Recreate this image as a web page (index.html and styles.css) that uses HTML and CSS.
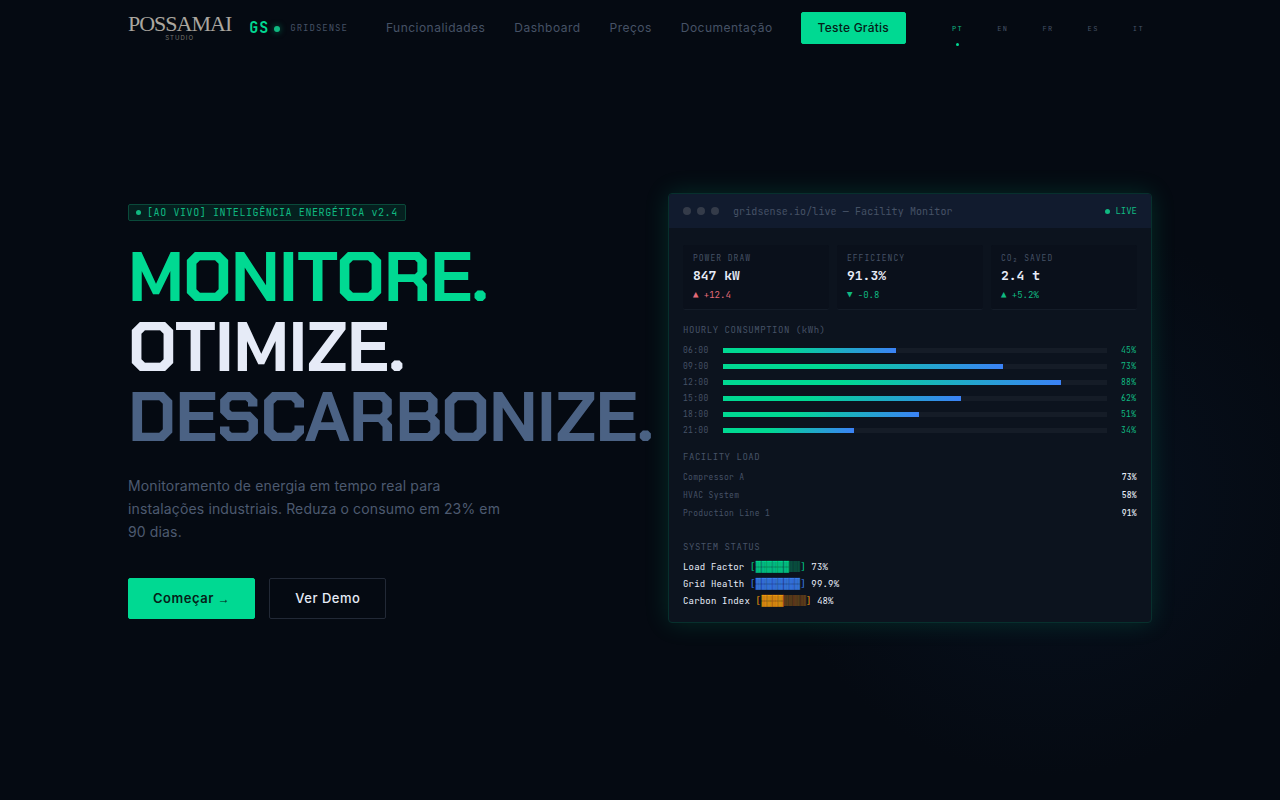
FILE: index.html
```html
<!DOCTYPE html>
<html lang="pt">
<head>
    <meta charset="UTF-8">
    <meta name="viewport" content="width=device-width, initial-scale=1">
    <title>GridSense</title>
    <link rel="stylesheet" href="styles.css">
</head>
<body>
    <header class="nav">
        <a class="studio" href="#">
            <span class="studio-name">POSSAMAI</span>
            <span class="studio-sub">STUDIO</span>
        </a>
        <a class="brand" href="#">
            <span class="brand-mark">GS</span>
            <span class="brand-dot"></span>
            <span class="brand-name">GRIDSENSE</span>
        </a>
        <nav class="links">
            <a href="#">Funcionalidades</a>
            <a href="#">Dashboard</a>
            <a href="#">Preços</a>
            <a href="#">Documentação</a>
        </nav>
        <button class="btn btn-small" type="button">Teste Grátis</button>
        <div class="langs">
            <a class="active" href="#">PT</a>
            <a href="#">EN</a>
            <a href="#">FR</a>
            <a href="#">ES</a>
            <a href="#">IT</a>
        </div>
    </header>

    <main class="hero">
        <section class="intro">
            <div class="badge"><span class="dot"></span>[AO VIVO] INTELIGÊNCIA ENERGÉTICA v2.4</div>
            <h1>
                <span class="line green">MONITORE.</span>
                <span class="line">OTIMIZE.</span>
                <span class="line slate">DESCARBONIZE.</span>
            </h1>
            <p class="lead">Monitoramento de energia em tempo real para instalações industriais. Reduza o consumo em 23% em 90 dias.</p>
            <div class="actions">
                <button class="btn" type="button">Começar <span class="arrow">→</span></button>
                <button class="btn btn-outline" type="button">Ver Demo</button>
            </div>
        </section>

        <section class="panel">
            <div class="panel-head">
                <span class="lights"><i></i><i></i><i></i></span>
                <span class="panel-title">gridsense.io/live — Facility Monitor</span>
                <span class="live"><span class="dot"></span>LIVE</span>
            </div>
            <div class="panel-body">
                <div class="metrics">
                    <div class="metric">
                        <div class="metric-label">POWER DRAW</div>
                        <div class="metric-value">847 kW</div>
                        <div class="metric-delta bad">▲ +12.4</div>
                    </div>
                    <div class="metric">
                        <div class="metric-label">EFFICIENCY</div>
                        <div class="metric-value">91.3%</div>
                        <div class="metric-delta">▼ -0.8</div>
                    </div>
                    <div class="metric">
                        <div class="metric-label">CO₂ SAVED</div>
                        <div class="metric-value">2.4 t</div>
                        <div class="metric-delta">▲ +5.2%</div>
                    </div>
                </div>

                <h2>HOURLY CONSUMPTION (kWh)</h2>
                <div class="bars">
                    <div class="bar"><span>06:00</span><div class="track"><div class="fill" style="width:45%"></div></div><b>45%</b></div>
                    <div class="bar"><span>09:00</span><div class="track"><div class="fill" style="width:73%"></div></div><b>73%</b></div>
                    <div class="bar"><span>12:00</span><div class="track"><div class="fill" style="width:88%"></div></div><b>88%</b></div>
                    <div class="bar"><span>15:00</span><div class="track"><div class="fill" style="width:62%"></div></div><b>62%</b></div>
                    <div class="bar"><span>18:00</span><div class="track"><div class="fill" style="width:51%"></div></div><b>51%</b></div>
                    <div class="bar"><span>21:00</span><div class="track"><div class="fill" style="width:34%"></div></div><b>34%</b></div>
                </div>

                <h2>FACILITY LOAD</h2>
                <div class="loads">
                    <div class="load"><span>Compressor A</span><b>73%</b></div>
                    <div class="load"><span>HVAC System</span><b>58%</b></div>
                    <div class="load"><span>Production Line 1</span><b>91%</b></div>
                </div>

                <h2>SYSTEM STATUS</h2>
                <div class="status">
                    <div>Load Factor <span class="green">[▓▓▓▓▓▓░░]</span> 73%</div>
                    <div>Grid Health <span class="blue">[▓▓▓▓▓▓▓▓]</span> 99.9%</div>
                    <div>Carbon Index <span class="amber">[▓▓▓▓░░░░]</span> 48%</div>
                </div>
            </div>
        </section>
    </main>
</body>
</html>
```
FILE: styles.css
```css
*{box-sizing:border-box;margin:0;padding:0;}
:root{
    --bg:#050a12;
    --green:#00d992;
    --green-dim:#10b981;
    --blue:#3b82f6;
    --muted:#465266;
    --light:#e6ebf7;
    --mono:"JetBrains Mono","DejaVu Sans Mono",monospace;
}
body{
    display:flex;
    flex-direction:column;
    min-height:100vh;
    padding:0 10%;
    background:radial-gradient(circle 280px at 82% 62%,#07111f 0%,var(--bg) 100%) var(--bg);
    color:var(--light);
    font-family:Inter,sans-serif;
}
a{color:inherit;text-decoration:none;}

/* nav */
.nav{display:flex;align-items:center;height:56px;}
.studio{display:flex;flex-direction:column;align-items:center;color:#aaa69f;}
.studio-name{font:22px/20px "Liberation Serif",serif;letter-spacing:-1px;}
.studio-sub{font-size:6px;line-height:8px;letter-spacing:1px;color:#77756f;}
.brand{display:flex;align-items:center;margin-left:18px;font-family:var(--mono);}
.brand-mark{font-size:15px;font-weight:700;letter-spacing:1px;color:var(--green);}
.brand-dot{width:6px;height:6px;margin:2px 10px 0 5px;border-radius:50%;background:var(--green-dim);box-shadow:0 0 6px rgba(0,217,146,.5);}
.brand-name{font-size:9px;letter-spacing:1px;color:var(--muted);}
.links{display:flex;gap:29px;margin:0 28px 0 38px;padding-bottom:2px;font-size:12px;letter-spacing:.04em;color:var(--muted);}
.langs{display:flex;gap:18px;margin-left:auto;padding-top:2px;font:7px/20px var(--mono);letter-spacing:.2em;color:var(--muted);}
.langs a{position:relative;padding:0 8px;}
.langs .active{color:var(--green-dim);}
.langs .active::after{content:"";position:absolute;left:50%;bottom:-7px;width:3px;height:3px;margin-left:-2px;border-radius:50%;background:var(--green);}

.btn{
    height:41px;
    padding:0 24px;
    border:1px solid var(--green);
    border-radius:2px;
    background:var(--green);
    color:#062018;
    font:600 13px/20px Inter,sans-serif;
    letter-spacing:.04em;
    white-space:nowrap;
}
.btn-small{height:32px;padding:0 16px;font-size:12px;font-weight:500;letter-spacing:.02em;}
.btn-outline{padding:0 25px;border-color:#222936;background:transparent;color:var(--light);font-weight:500;}
.arrow{font:400 12px/20px "Liberation Sans",sans-serif;}

/* hero */
.hero{flex:1;display:grid;grid-template-columns:minmax(0,1fr) minmax(0,1fr);gap:56px;align-items:center;padding-bottom:40px;}
.intro{display:flex;flex-direction:column;align-items:flex-start;padding-top:6px;}
.dot{display:inline-block;width:5px;height:5px;border-radius:50%;background:var(--green-dim);}
.badge{
    display:flex;
    align-items:center;
    gap:6px;
    padding:0 7px;
    border:1px solid #0a4a3a;
    border-radius:2px;
    background:#05201f;
    color:var(--green-dim);
    font:10px/15px var(--mono);
    letter-spacing:.06em;
    white-space:nowrap;
}
h1{margin:22px 0 21px;font:700 70px/70px "Chakra Petch",Roboto,sans-serif;letter-spacing:-1px;white-space:nowrap;}
.line{display:block;}
.green{color:var(--green);}
.slate{color:#4b6284;}
.blue{color:var(--blue);}
.amber{color:#f59e0b;}
.lead{max-width:380px;font-size:14px;line-height:23px;letter-spacing:.01em;color:#4d5a70;}
.actions{display:flex;gap:14px;margin-top:35px;}

/* monitor panel */
.panel{
    border:1px solid #07302d;
    border-radius:4px;
    background:#0c131e;
    box-shadow:0 0 24px rgba(0,217,146,.16);
    font-family:var(--mono);
}
.panel-head{display:flex;align-items:center;height:34px;padding:0 14px;border-radius:3px 3px 0 0;background:#111b2e;color:var(--muted);}
.lights{display:flex;gap:6px;margin-right:14px;}
.lights i{width:8px;height:8px;border-radius:50%;background:#343b49;}
.panel-title{font-size:10px;letter-spacing:.01em;}
.live{display:flex;align-items:center;gap:5px;margin-left:auto;font-size:9px;color:var(--green-dim);}
.panel-body{padding:17px 14px 15px;}

.metrics{display:grid;grid-template-columns:repeat(3,1fr);gap:8px;margin-bottom:14px;}
.metric{padding:8px 10px;border-bottom:1px solid #141c28;border-radius:2px;background:#0a101b;}
.metric-label{font-size:8px;line-height:10px;letter-spacing:1px;color:var(--muted);}
.metric-value{margin:4px 0;font-size:13px;font-weight:600;line-height:18px;}
.metric-delta{font-size:9px;line-height:12px;color:var(--green-dim);}
.bad{color:#e26a78;}

h2{margin-bottom:8px;font-size:9px;font-weight:400;line-height:12px;letter-spacing:.06em;color:var(--muted);}
.bars{display:flex;flex-direction:column;gap:4px;margin-bottom:15px;}
.bar{display:grid;grid-template-columns:26px 1fr 16px;gap:14px;align-items:center;font-size:8px;line-height:12px;letter-spacing:.04em;color:var(--muted);}
.bar b{font-weight:400;color:var(--green-dim);}
.track{height:5px;background:#151c27;}
.fill{height:5px;background:linear-gradient(90deg,var(--green) 35%,var(--blue));}

.loads{display:flex;flex-direction:column;gap:6px;margin-bottom:22px;}
.load{display:flex;justify-content:space-between;font-size:8px;line-height:12px;letter-spacing:.04em;color:var(--muted);}
.load b{font-weight:500;color:var(--light);}

.status{display:flex;flex-direction:column;gap:5px;font-size:9px;line-height:12px;letter-spacing:.02em;}
```
